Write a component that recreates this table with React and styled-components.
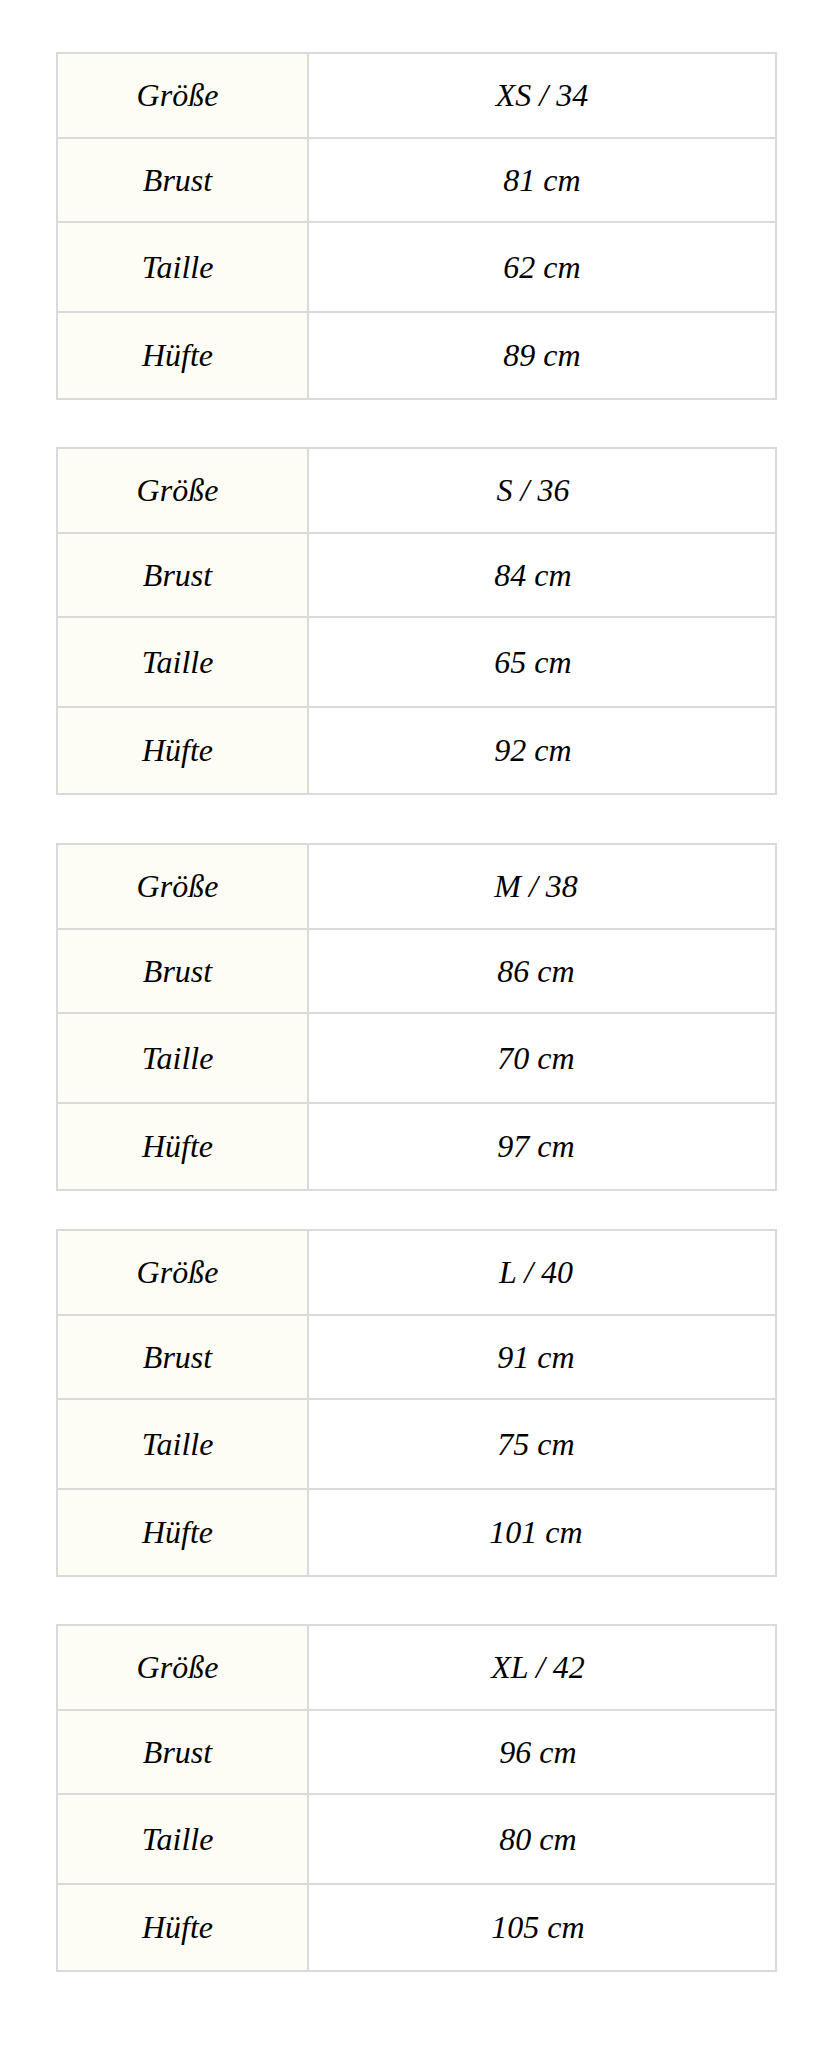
import React from 'react'
import styled, { createGlobalStyle } from 'styled-components'

const GlobalStyle = createGlobalStyle`
  body {
    margin: 0;
    background: #ffffff;
    font-family: "Liberation Serif", "Times New Roman", serif;
    color: #000000;
  }
`

const Page = styled.div`
  display: flex;
  flex-direction: column;
  align-items: center;
  padding: 52px 0 60px;
`

const SizeTable = styled.table`
  width: 721px;
  margin-top: ${p => p.$gap}px;
  margin-left: 1px;
  border: 1px solid #dadada;
  border-collapse: separate;
  border-spacing: 0;
  table-layout: fixed;
`

const Row = styled.tr`
  height: ${p => p.$h}px;
`

const Cell = styled.td`
  border: 1px solid #dadada;
  text-align: center;
  vertical-align: middle;
  font-style: italic;
  font-size: 32px;
  line-height: 1.2;
  padding: 0;
`

const LabelCell = styled(Cell)`
  width: 239px;
  background: #fdfdf5;
  padding-right: 10px;
`

const ValueCell = styled(Cell)`
  background: #ffffff;
  padding-right: ${p => p.$shift}px;
`

const rowHeights = [85, 84, 90, 87]
const labels = ['Größe', 'Brust', 'Taille', 'Hüfte']

const sizes = [
  { size: 'XS / 34', values: ['81 cm', '62 cm', '89 cm'], gap: 0, shift: 0 },
  { size: 'S / 36', values: ['84 cm', '65 cm', '92 cm'], gap: 47, shift: 18 },
  { size: 'M / 38', values: ['86 cm', '70 cm', '97 cm'], gap: 48, shift: 12 },
  { size: 'L / 40', values: ['91 cm', '75 cm', '101 cm'], gap: 38, shift: 12 },
  { size: 'XL / 42', values: ['96 cm', '80 cm', '105 cm'], gap: 47, shift: 8 },
]

const App = () => (
  <>
    <GlobalStyle />
    <Page>
      {sizes.map(s => {
        const cells = [s.size, ...s.values]
        return (
          <SizeTable key={s.size} $gap={s.gap}>
            <tbody>
              {labels.map((label, i) => (
                <Row key={label} $h={rowHeights[i]}>
                  <LabelCell>{label}</LabelCell>
                  <ValueCell $shift={s.shift}>{cells[i]}</ValueCell>
                </Row>
              ))}
            </tbody>
          </SizeTable>
        )
      })}
    </Page>
  </>
)

export default App
